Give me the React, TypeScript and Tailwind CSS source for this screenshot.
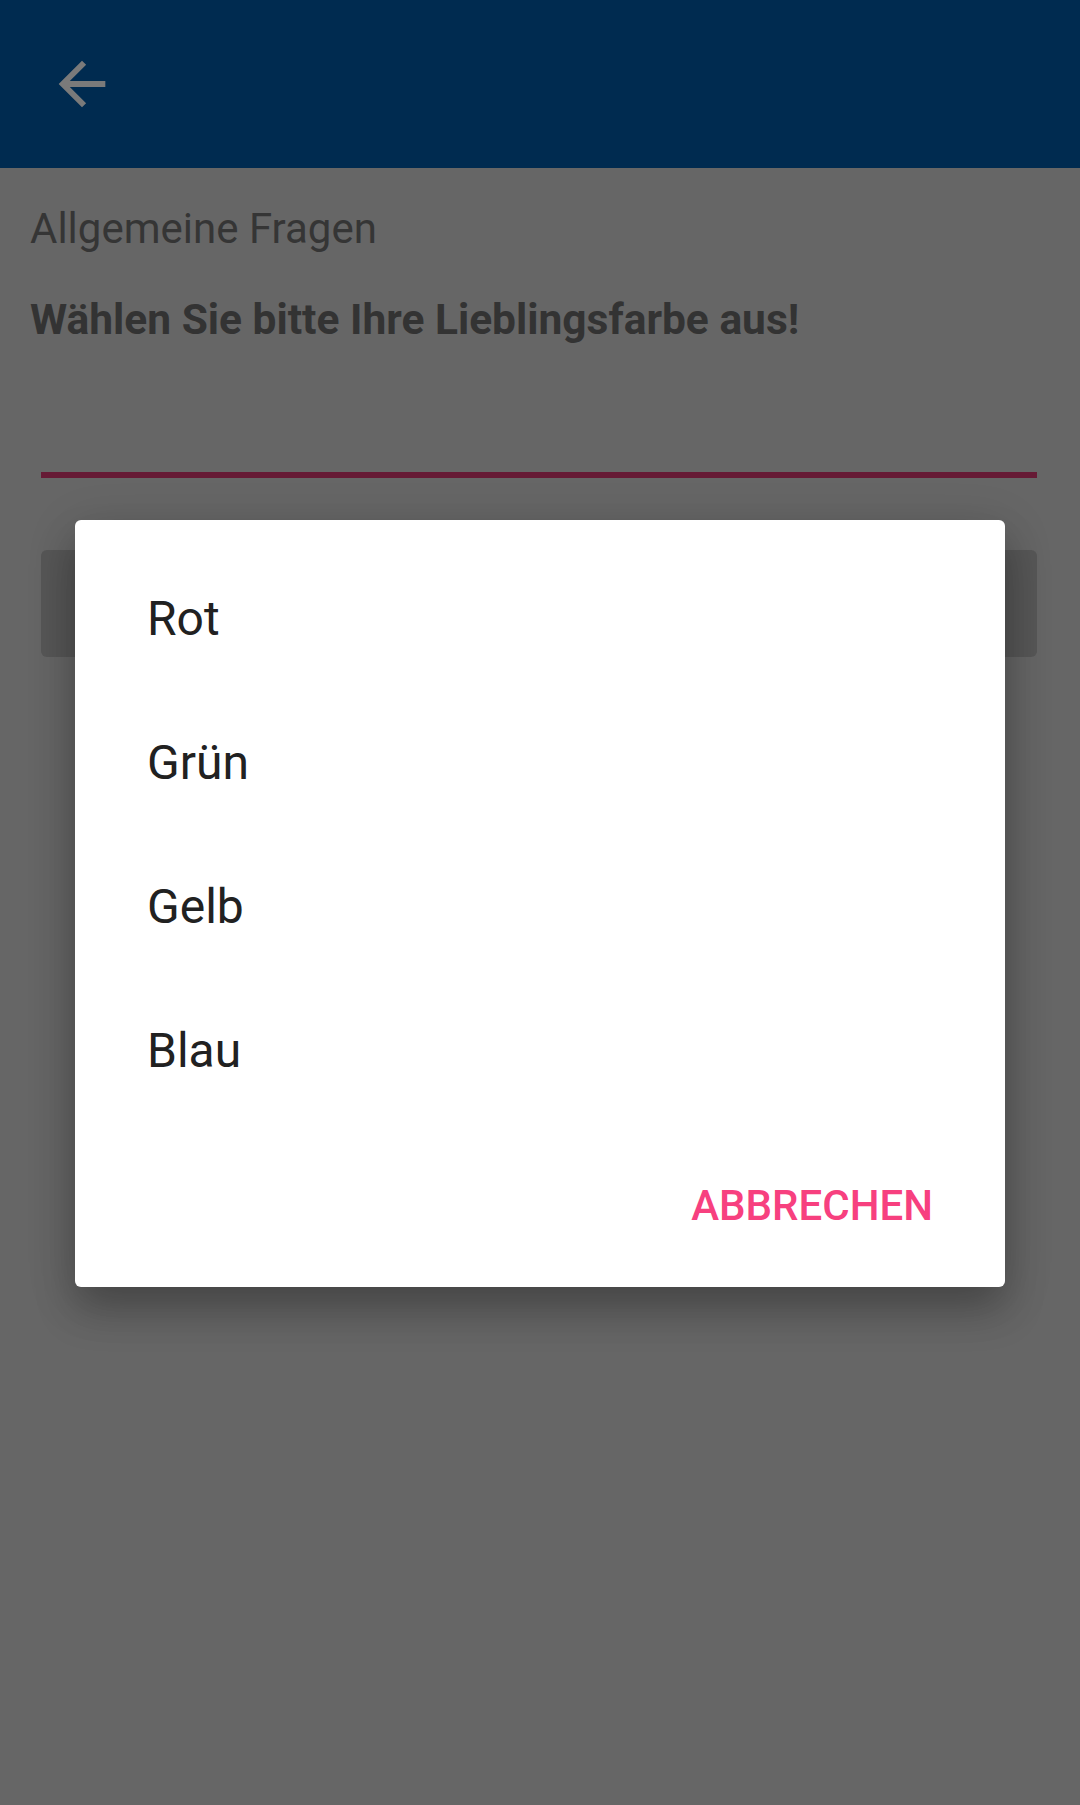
import React from "react";

const colours = ["Rot", "Grün", "Gelb", "Blau"];

function BackArrow() {
  return (
    <svg viewBox="0 0 24 24" className="w-[70px] h-[70px]" fill="#7a7a7a">
      <path d="M20 11H7.83l5.59-5.59L12 4l-8 8 8 8 1.41-1.41L7.83 13H20v-2z" />
    </svg>
  );
}

export default function App() {
  return (
    <div className="relative min-h-[1805px] w-[1080px] bg-[#666666] font-['Roboto',_'Noto_Sans',sans-serif] overflow-hidden">
      {/* toolbar */}
      <div className="h-[168px] bg-[#002b50] flex items-center pl-[47px]">
        <BackArrow />
      </div>

      {/* question */}
      <div className="px-[30px]">
        <p className="mt-[36px] text-[42px] leading-[50px] text-[#353535]">Allgemeine Fragen</p>
        <p className="mt-[41px] text-[42.5px] leading-[50px] font-bold text-[#333333]">
          Wählen Sie bitte Ihre Lieblingsfarbe aus!
        </p>
      </div>

      <div className="ml-[41px] mr-[43px] mt-[127px] h-[6px] bg-[#661a35]" />

      <div className="ml-[41px] mr-[43px] mt-[72px] h-[107px] rounded-[6px] bg-[#575757]" />

      {/* selection dialog */}
      <div className="absolute left-[75px] top-[520px] w-[930px] h-[767px] rounded-[6px] bg-white shadow-[0_24px_40px_rgba(0,0,0,0.22),0_10px_50px_rgba(0,0,0,0.16)] flex flex-col">
        <ul className="pt-[27px]">
          {colours.map((c) => (
            <li key={c} className="h-[144px] leading-[144px] pl-[72px] text-[48px] text-[#212121]">
              {c}
            </li>
          ))}
        </ul>
        <div className="flex-1 flex items-center justify-end pr-[72px]">
          <span className="text-[42px] font-medium text-[#f7407f]">ABBRECHEN</span>
        </div>
      </div>
    </div>
  );
}
